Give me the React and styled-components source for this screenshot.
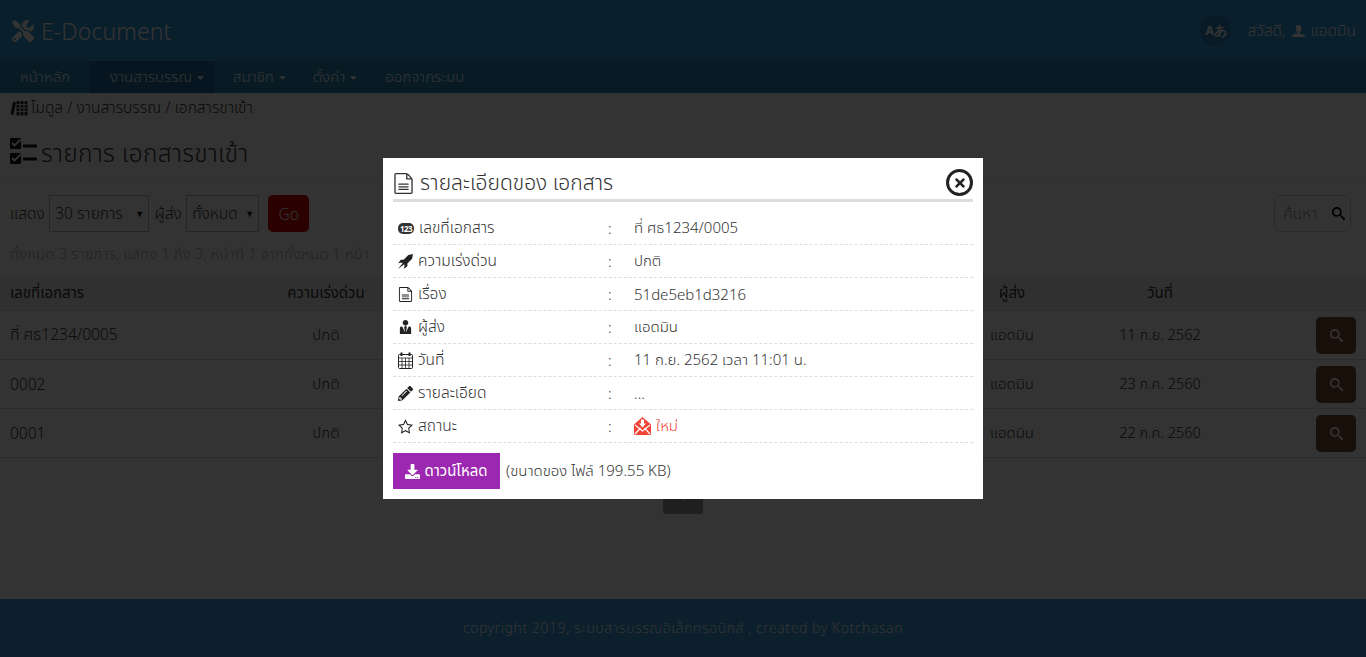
import React from 'react';
import styled, { createGlobalStyle } from 'styled-components';
import { FaTools, FaCaretDown, FaTimes, FaPencilAlt, FaDownload } from 'react-icons/fa';
import { ImRocket, ImFileText2, ImUserTie, ImStarEmpty, ImUser, ImSearch } from 'react-icons/im';

const thai = '"Noto Sans", "Noto Sans Thai", Lato, "DejaVu Sans", sans-serif';

const GlobalStyle = createGlobalStyle`
  html, body { margin: 0; padding: 0; height: 100%; }
  body {
    font-family: ${thai};
    font-size: 15.5px;
    font-weight: 300;
    color: #333;
    background: #fff;
    overflow: hidden;
  }
  * { box-sizing: border-box; }
`;

const Page = styled.div`
  position: relative;
  width: 1366px;
  height: 657px;
  display: flex;
  flex-direction: column;
  overflow: hidden;
`;

const Header = styled.header`
  height: 61px;
  background: #3299dc;
  display: flex;
  align-items: center;
  justify-content: space-between;
  padding: 0 10px 0 12px;
  color: #fff;
`;

const Logo = styled.div`
  display: flex;
  align-items: center;
  gap: 7px;
  font-size: 23px;
  letter-spacing: 0.1px;
  svg { font-size: 22px; }
`;

const UserBox = styled.div`
  display: flex;
  align-items: center;
  gap: 5px;
  svg { font-size: 15px; }
`;

const LangButton = styled.span`
  width: 31px;
  height: 31px;
  border-radius: 50%;
  background: #2a80b8;
  font-size: 12.5px;
  font-weight: 700;
  display: flex;
  align-items: center;
  justify-content: center;
  margin-right: 11px;
`;

const Nav = styled.nav`
  height: 32px;
  background: #2885b9;
  display: flex;
  color: #fff;
  font-size: 15px;
`;

const NavItem = styled.a`
  display: flex;
  align-items: center;
  gap: 3px;
  padding: ${(p) => p.$padding};
  background: ${(p) => (p.$active ? '#1f6b99' : 'transparent')};
  svg { font-size: 11px; }
`;

const Main = styled.main`
  flex: 1;
  display: flex;
  flex-direction: column;
  min-height: 0;
`;

const Breadcrumb = styled.div`
  height: 30px;
  display: flex;
  align-items: center;
  gap: 3px;
  padding-left: 10px;
`;

const PageTitle = styled.h1`
  height: 58px;
  margin: 0 0 14px;
  padding: 5px 10px 0;
  display: flex;
  align-items: center;
  gap: 4px;
  font-size: 24.5px;
  font-weight: 300;
  letter-spacing: 0.3px;
  border-bottom: 1px solid #eee;
  svg { margin-top: -5px; }
`;

const FilterBar = styled.div`
  height: 37px;
  padding: 0 15px 0 10px;
  display: flex;
  align-items: center;
  gap: 4.5px;
`;

const FilterSelect = styled.div`
  width: ${(p) => p.$width}px;
  height: 37px;
  margin-right: 1px;
  border: 1px solid #bbb;
  display: flex;
  align-items: center;
  justify-content: space-between;
  padding: 0 4px 0 5px;
  color: #333;
  span { font-size: 9px; color: #111; }
`;

const GoButton = styled.button`
  width: 41px;
  height: 37px;
  margin-left: 3.5px;
  border: 0;
  border-radius: 5px;
  background: #d40000;
  color: #fff;
  font: inherit;
`;

const SearchBox = styled.div`
  width: 77px;
  height: 37px;
  margin-left: auto;
  border: 1px solid #ccc;
  border-radius: 8px;
  display: flex;
  align-items: center;
  justify-content: space-between;
  padding: 0 5px 0 8px;
  color: #999;
  svg { color: #000; font-size: 13px; }
`;

const Summary = styled.div`
  height: 45px;
  padding: 0 10px;
  display: flex;
  align-items: center;
  color: #aaa;
  font-size: 15px;
  letter-spacing: 0.08px;
`;

const Table = styled.div`
  display: flex;
  flex-direction: column;
`;

const Row = styled.div`
  display: grid;
  grid-template-columns: 270px 92px 610px 60px 236px 78px;
  align-items: center;
  height: ${(p) => (p.$head ? 34 : 49)}px;
  background: ${(p) => (p.$head ? '#f0f0f0' : 'transparent')};
  border-bottom: 1px solid #ddd;
  padding-left: 10px;
  font-size: 15px;
  font-weight: ${(p) => (p.$head ? 400 : 300)};
`;

const Cell = styled.div`
  text-align: ${(p) => p.$align || 'center'};
  font-size: ${(p) => p.$size || 15}px;
  white-space: nowrap;
`;

const ViewButton = styled.button`
  width: 40px;
  height: 37px;
  border: 0;
  border-radius: 5px;
  background: #7a4a2c;
  color: #fff;
  margin-left: 38px;
  display: flex;
  align-items: center;
  justify-content: center;
  font-size: 13px;
`;

const PagerWrap = styled.div`
  display: flex;
  justify-content: center;
  margin-top: 18px;
`;

const PagerButton = styled.span`
  width: 40px;
  height: 38px;
  border-radius: 3px;
  background: #999;
  color: #fff;
  display: flex;
  align-items: center;
  justify-content: center;
`;

const Footer = styled.footer`
  height: 58px;
  background: #3c9bdc;
  display: flex;
  align-items: center;
  justify-content: center;
  color: #fff;
  font-size: 14px;
  letter-spacing: 0.54px;
`;

const Overlay = styled.div`
  position: absolute;
  inset: 0;
  background: rgba(0, 0, 0, 0.8);
`;

const Modal = styled.div`
  position: absolute;
  left: 383px;
  top: 158px;
  width: 600px;
  height: 341px;
  background: #fff;
  padding: 10px;
`;

const ModalHead = styled.div`
  height: 34px;
  display: flex;
  align-items: center;
  gap: 6px;
  font-size: 21px;
  border-bottom: 3px solid #ddd;
  color: #333;
  svg { font-size: 21px; }
`;

const CloseButton = styled.button`
  position: absolute;
  right: 10px;
  top: 11px;
  width: 27px;
  height: 27px;
  padding: 0;
  border-radius: 50%;
  border: 3px solid #222;
  background: #fff;
  color: #222;
  display: flex;
  align-items: center;
  justify-content: center;
  svg { font-size: 14px; }
`;

const DetailList = styled.div`
  margin-top: 10px;
`;

const DetailRow = styled.div`
  display: grid;
  grid-template-columns: 215px 26px 1fr;
  align-items: center;
  height: 33px;
  border-bottom: 1px dashed #ddd;
  font-size: 15px;
`;

const DetailLabel = styled.div`
  display: flex;
  align-items: center;
  gap: 5px;
  padding-left: 5px;
  font-size: 15.5px;
  svg { font-size: 15px; color: #222; }
`;

const NewStatus = styled.span`
  display: flex;
  align-items: center;
  gap: 5px;
  color: #f44336;
`;

const Actions = styled.div`
  display: flex;
  align-items: center;
  gap: 6px;
  margin-top: 10px;
  font-size: 15px;
`;

const DownloadButton = styled.button`
  width: 107px;
  height: 36px;
  border: 0;
  background: #9c27b0;
  color: #fff;
  font: inherit;
  font-weight: 400;
  display: flex;
  align-items: center;
  justify-content: center;
  gap: 4px;
`;

const Badge123 = styled.span`
  width: 16px;
  height: 11px;
  border-radius: 5px;
  background: #333;
  color: #fff;
  font-size: 8px;
  line-height: 11px;
  font-weight: 700;
  text-align: center;
  letter-spacing: -0.5px;
`;

const BooksIcon = () => (
  <svg width="18" height="17" viewBox="0 0 18 17" fill="#2a2a2a">
    <path d="M3 1.5 L6 2.5 L3.5 15 L0.5 14 Z" />
    <rect x="6.5" y="1" width="3" height="14.5" />
    <rect x="10.5" y="1" width="3" height="14.5" />
    <rect x="14.5" y="1" width="3" height="14.5" />
    <path d="M6.5 4.5h11M6.5 8h11M6.5 11.5h11" stroke="#fff" strokeWidth="0.8" />
  </svg>
);

const TasksIcon = () => (
  <svg width="27" height="27" viewBox="0 0 27 27" fill="none">
    <rect x="0" y="0" width="11" height="11" rx="1" fill="#111" />
    <rect x="0" y="15" width="11" height="11" rx="1" fill="#111" />
    <path d="M2 5l2.5 2.5L10.5 1.5M2 20l2.5 2.5L10.5 16.5" stroke="#fff" strokeWidth="1.8" />
    <path d="M13 8h14M13 21h14" stroke="#111" strokeWidth="3" />
  </svg>
);

const CalendarIcon = () => (
  <svg width="15" height="17" viewBox="0 0 15 17" fill="none" stroke="#222">
    <rect x="0.5" y="2.5" width="14" height="14" rx="1" />
    <path d="M0.5 6h14M0.5 9.5h14M0.5 13h14M4 6v10M7.5 6v10M11 6v10" strokeWidth="0.8" />
    <path d="M3.5 0.5v3.5M11.5 0.5v3.5" strokeWidth="2" />
  </svg>
);

const MailIcon = () => (
  <svg width="17" height="18" viewBox="0 0 17 18">
    <path d="M0 7.5 L8.5 0 L17 7.5 V17 a1 1 0 0 1-1 1 H1 a1 1 0 0 1-1-1 Z" fill="#f44336" />
    <path d="M1 17 L6.5 11 M16 17 L10.5 11 M1 8 L8.5 14 L16 8" stroke="#fff" strokeWidth="1.2" fill="none" />
    <path d="M7 2.5h3v4h2L8.5 10.5 5 6.5h2z" fill="#fff" />
  </svg>
);

const details = [
  { icon: <Badge123>123</Badge123>, label: 'เลขที่เอกสาร', value: 'ที่ ศธ1234/0005' },
  { icon: <ImRocket />, label: 'ความเร่งด่วน', value: 'ปกติ' },
  { icon: <ImFileText2 />, label: 'เรื่อง', value: '51de5eb1d3216' },
  { icon: <ImUserTie />, label: 'ผู้ส่ง', value: 'แอดมิน' },
  { icon: <CalendarIcon />, label: 'วันที่', value: '11 ก.ย. 2562 เวลา 11:01 น.' },
  { icon: <FaPencilAlt />, label: 'รายละเอียด', value: '...' },
  { icon: <ImStarEmpty />, label: 'สถานะ', value: <NewStatus><MailIcon />ใหม่</NewStatus> },
];

const rows = [
  { no: 'ที่ ศธ1234/0005', date: '11 ก.ย. 2562' },
  { no: '0002', date: '23 ก.ค. 2560' },
  { no: '0001', date: '22 ก.ค. 2560' },
];

export default function App() {
  return (
    <Page>
      <GlobalStyle />
      <Header>
        <Logo><FaTools />E-Document</Logo>
        <UserBox>
          <LangButton>Aあ</LangButton>
          สวัสดี, <ImUser /> แอดมิน
        </UserBox>
      </Header>
      <Nav>
        <NavItem $padding="0 20px">หน้าหลัก</NavItem>
        <NavItem $active $padding="0 8px 0 20px">งานสารบรรณ <FaCaretDown /></NavItem>
        <NavItem $padding="0 12px 0 19px">สมาชิก <FaCaretDown /></NavItem>
        <NavItem $padding="0 13px">ตั้งค่า <FaCaretDown /></NavItem>
        <NavItem $padding="0 13px">ออกจากระบบ</NavItem>
      </Nav>
      <Main>
        <Breadcrumb><BooksIcon /> โมดูล / งานสารบรรณ / เอกสารขาเข้า</Breadcrumb>
        <PageTitle><TasksIcon />รายการ เอกสารขาเข้า</PageTitle>
        <FilterBar>
          แสดง
          <FilterSelect $width={100}>30 รายการ<span>▼</span></FilterSelect>
          ผู้ส่ง
          <FilterSelect $width={73}>ทั้งหมด<span>▼</span></FilterSelect>
          <GoButton>Go</GoButton>
          <SearchBox>ค้นหา<ImSearch /></SearchBox>
        </FilterBar>
        <Summary>ทั้งหมด 3 รายการ, แสดง 1 ถึง 3, หน้าที่ 1 จากทั้งหมด 1 หน้า</Summary>
        <Table>
          <Row $head>
            <Cell $align="left">เลขที่เอกสาร</Cell>
            <Cell>ความเร่งด่วน</Cell>
            <Cell />
            <Cell>ผู้ส่ง</Cell>
            <Cell>วันที่</Cell>
            <Cell />
          </Row>
          {rows.map((row) => (
            <Row key={row.no}>
              <Cell $align="left" $size={15.5}>{row.no}</Cell>
              <Cell>ปกติ</Cell>
              <Cell />
              <Cell>แอดมิน</Cell>
              <Cell $size={14.5}>{row.date}</Cell>
              <Cell><ViewButton><ImSearch /></ViewButton></Cell>
            </Row>
          ))}
        </Table>
        <PagerWrap><PagerButton>1</PagerButton></PagerWrap>
      </Main>
      <Footer>copyright 2019, ระบบสารบรรณอิเล็กทรอนิกส์ , created by Kotchasan</Footer>
      <Overlay />
      <Modal>
        <ModalHead><ImFileText2 />รายละเอียดของ เอกสาร</ModalHead>
        <CloseButton><FaTimes /></CloseButton>
        <DetailList>
          {details.map((d) => (
            <DetailRow key={d.label}>
              <DetailLabel>{d.icon}{d.label}</DetailLabel>
              <div>:</div>
              <div>{d.value}</div>
            </DetailRow>
          ))}
        </DetailList>
        <Actions>
          <DownloadButton><FaDownload />ดาวน์โหลด</DownloadButton>
          (ขนาดของ ไฟล์ 199.55 KB)
        </Actions>
      </Modal>
    </Page>
  );
}
